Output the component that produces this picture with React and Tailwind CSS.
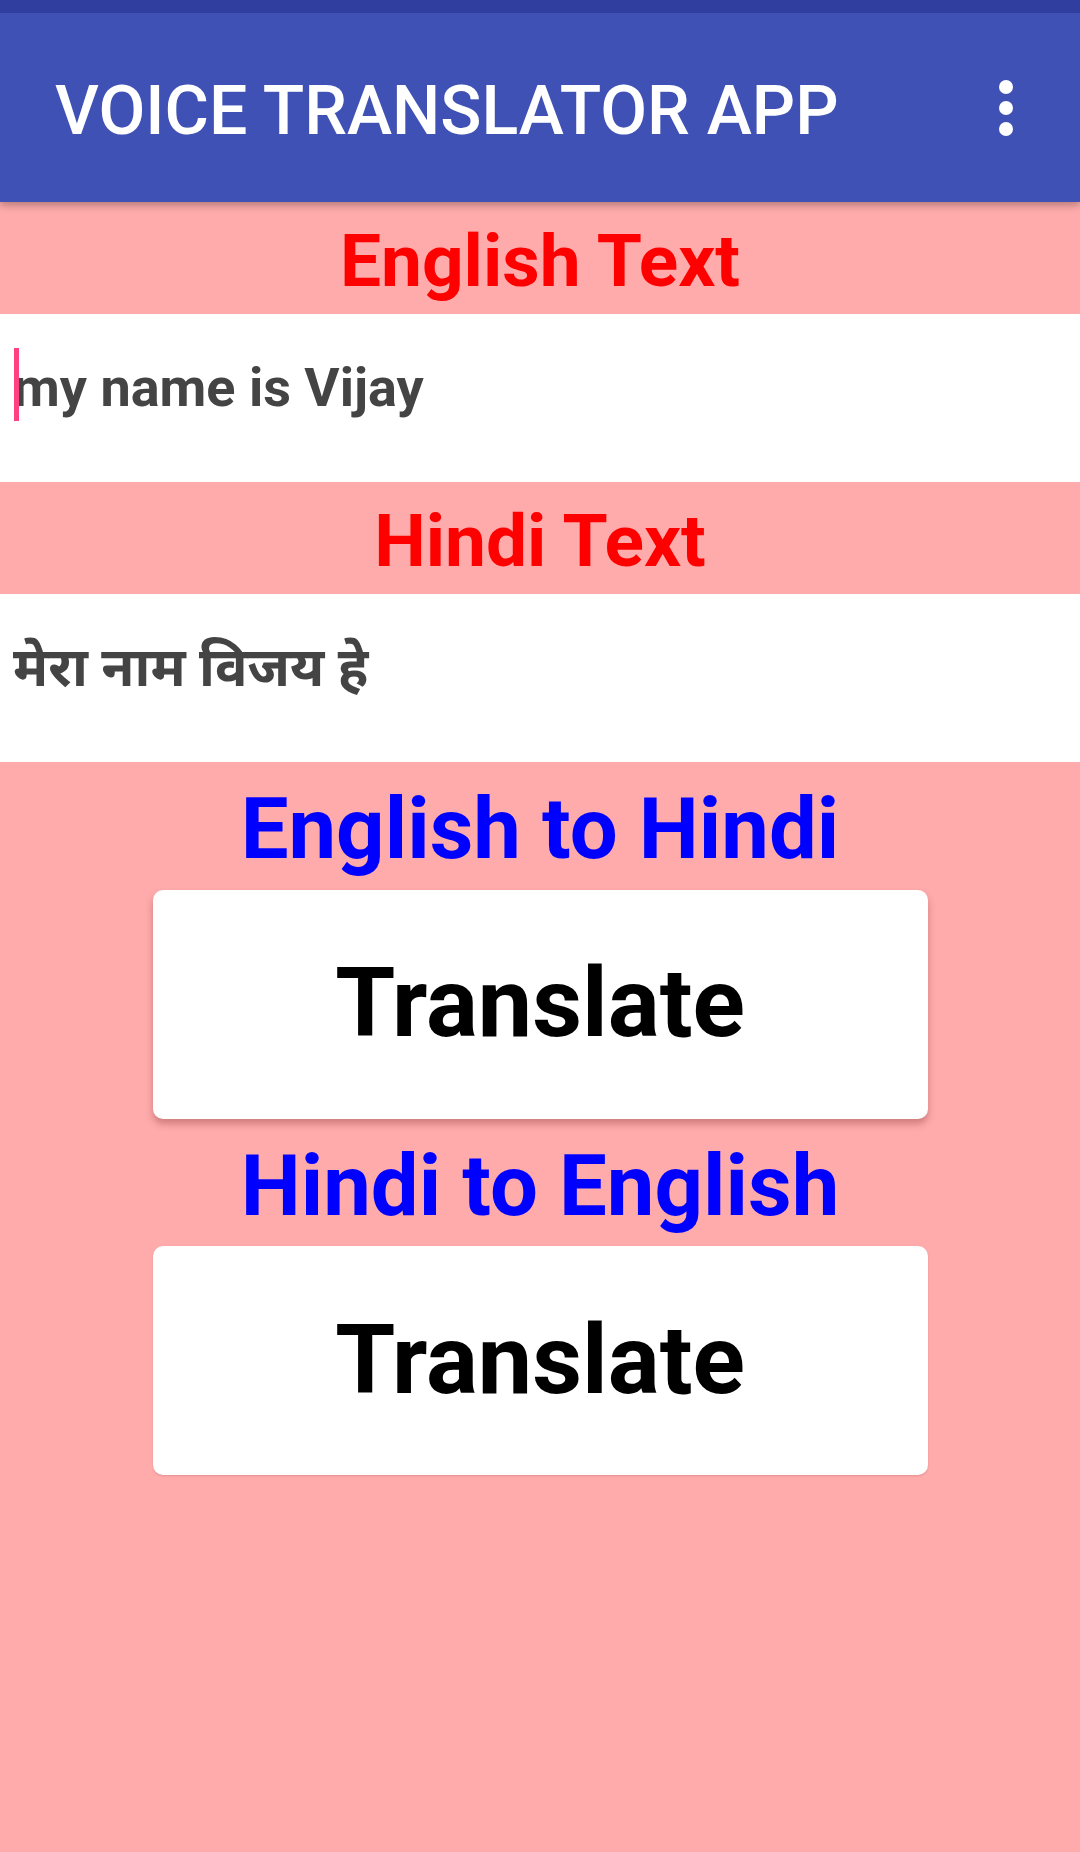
const font = { fontFamily: 'Roboto, "Noto Sans", "Noto Sans Devanagari", "Lohit Devanagari", sans-serif' }

function Band({ children }) {
  return (
    <div className="h-[112px] bg-[#ffabab] text-center">
      <div className="pt-[17px] text-[73px] leading-[1.172] font-bold text-[#ff0000]">{children}</div>
    </div>
  )
}

function Field({ children, cursor }) {
  return (
    <div className="relative h-[168px] bg-white px-[13px]">
      {cursor && <span className="absolute left-[14px] top-[34px] h-[73px] w-[5px] bg-[#ff4081]" />}
      <div className="pt-[42px] text-[54px] leading-[1.172] font-bold text-[#444444]">{children}</div>
    </div>
  )
}

function TranslateButton({ shadow }) {
  return (
    <button
      className={
        'mx-auto flex h-[229px] w-[775px] items-center justify-center rounded-[10px] bg-white text-[97px] font-bold leading-[1.172] text-black ' +
        (shadow ? 'shadow-[0_5px_7px_rgba(120,40,40,0.35)]' : 'shadow-[0_1px_2px_rgba(120,40,40,0.2)]')
      }
    >
      Translate
    </button>
  )
}

export default function App() {
  return (
    <div className="flex min-h-[1852px] w-[1080px] flex-col bg-[#ffabab]" style={font}>
      <div className="relative z-10 shadow-[0_3px_8px_rgba(0,0,0,0.3)]">
        <div className="h-[13px] bg-[#303f9f]" />
        <div className="flex h-[189px] items-center justify-between bg-[#3f51b5] pl-[55px] pr-[67px] pt-[8px]">
          <h1 className="text-[68px] font-medium leading-[1.172] text-white">VOICE TRANSLATOR APP</h1>
          <div className="flex flex-col items-center gap-[7px] pb-[8px]">
            <span className="h-[14px] w-[14px] rounded-full bg-white" />
            <span className="h-[14px] w-[14px] rounded-full bg-white" />
            <span className="h-[14px] w-[14px] rounded-full bg-white" />
          </div>
        </div>
      </div>

      <Band>English Text</Band>
      <Field cursor>my name is Vijay</Field>
      <Band>Hindi Text</Band>
      <Field>मेरा नाम विजय हे</Field>

      <div className="flex flex-col items-center pt-[18px]">
        <h2 className="text-[85px] font-bold leading-[1.172] text-[#0000ff]">English to Hindi</h2>
        <div className="mt-[10px] w-full">
          <TranslateButton shadow />
        </div>
        <h2 className="mt-[18px] text-[85px] font-bold leading-[1.172] text-[#0000ff]">Hindi to English</h2>
        <div className="mt-[10px] w-full">
          <TranslateButton />
        </div>
      </div>
    </div>
  )
}
